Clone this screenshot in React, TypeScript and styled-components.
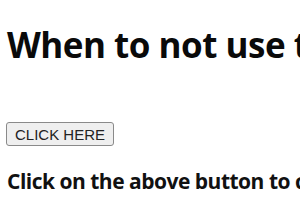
import styled, { createGlobalStyle } from 'styled-components';

const GlobalStyle = createGlobalStyle`
  body {
    margin: 0;
    background: #ffffff;
    font-family: 'Open Sans', 'DejaVu Sans', sans-serif;
    color: #111111;
  }
`;

const Page = styled.div`
  width: 300px;
  height: 210px;
  overflow: hidden;
  padding: 0 0 0 7px;
  box-sizing: border-box;
`;

const Heading = styled.h1`
  margin: 0;
  padding-top: 21px;
  font-size: 35px;
  font-weight: 700;
  line-height: 48px;
  letter-spacing: -0.5px;
  white-space: nowrap;
  color: #0a0a0a;
`;

const Button = styled.button`
  display: block;
  margin: 53px 0 0 -1px;
  height: 24px;
  padding: 0 8px;
  background: #efefef;
  border: 1px solid #8a8a8a;
  border-radius: 3px;
  font-family: 'Liberation Sans', Arial, sans-serif;
  font-size: 15px;
  color: #222222;
`;

const Note = styled.p`
  margin: 20px 0 0;
  font-size: 21px;
  font-weight: 700;
  line-height: 30px;
  letter-spacing: -0.5px;
  white-space: nowrap;
  color: #111111;
`;

const App = () => {
  return (
    <Page>
      <GlobalStyle />
      <Heading>When to not use the useLayoutEffect hook</Heading>
      <Button>CLICK HERE</Button>
      <Note>Click on the above button to change the state</Note>
    </Page>
  );
};

export default App;
